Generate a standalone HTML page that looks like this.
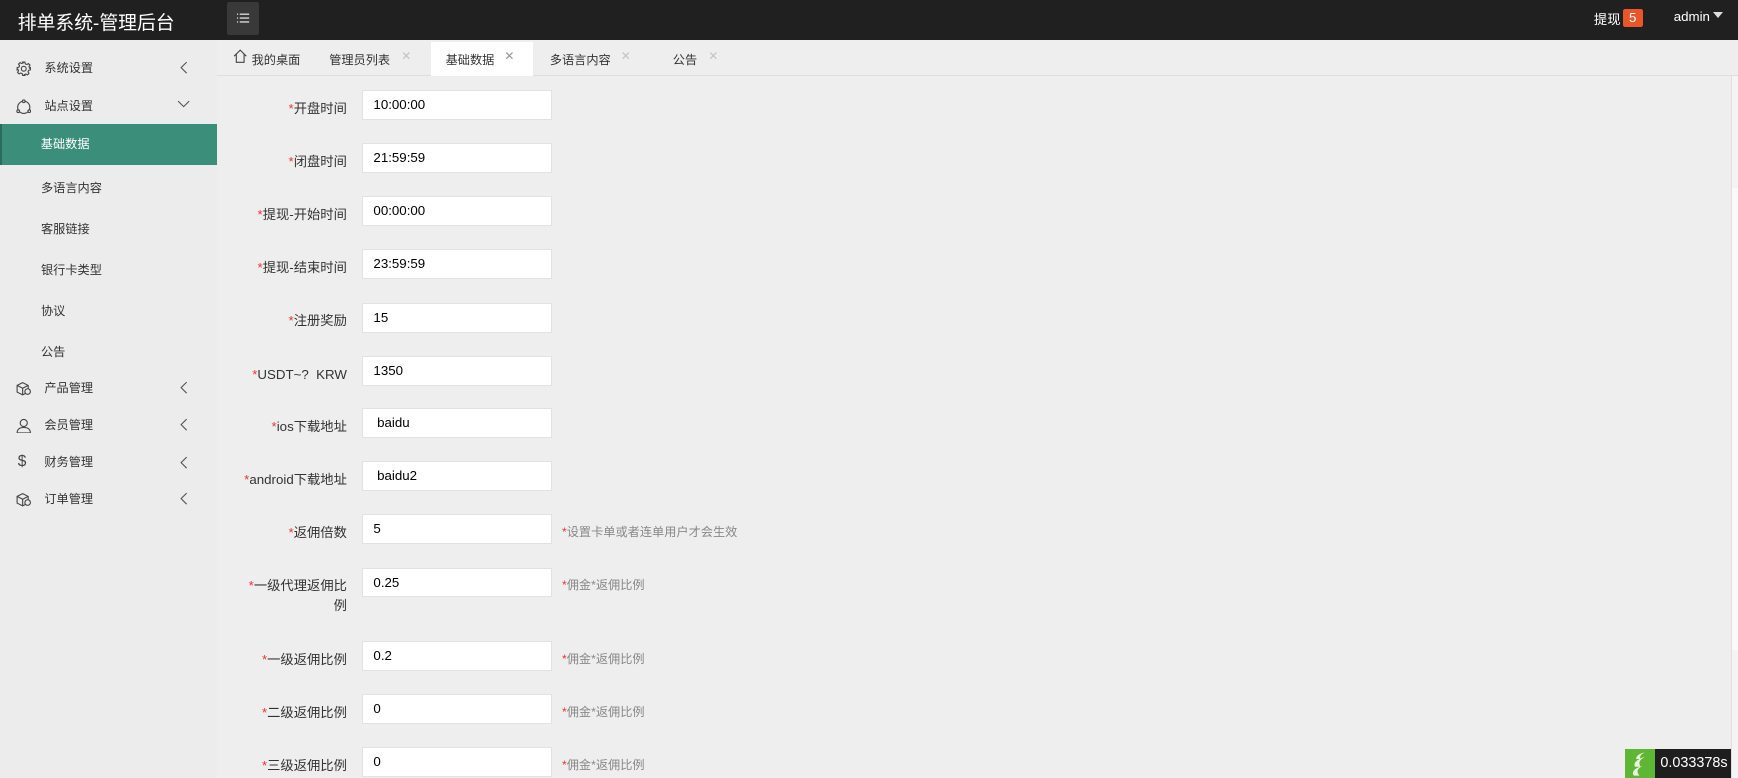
<!DOCTYPE html>
<html><head><meta charset="utf-8"><style>
*{margin:0;padding:0;box-sizing:border-box}
html,body{width:1738px;height:778px;overflow:hidden;background:#eeeeee}
#w{zoom:1.10842;width:1568px;height:702px;position:relative;font-family:"Liberation Sans","Noto Sans CJK SC",sans-serif;font-size:12px;color:#333;background:#eeeeee}
.hd{position:absolute;left:0;top:0;width:1568px;height:36px;background:#202020;color:#fff}
.title{position:absolute;left:16px;top:7px;font-size:17px}
.mb{position:absolute;left:205px;top:2px;width:29px;height:30px;background:#393939;border-radius:2px}
.sb{position:absolute;left:0;top:36px;width:196px;height:666px;background:#ececec}
.it{position:absolute;left:0;width:196px;height:34px;line-height:34px;font-size:11px;color:#333}
.it .t{position:absolute;left:40px;top:1px}
.it svg.i{position:absolute;left:14px;top:11px}
.it .ar{position:absolute;left:162px;top:11px}
.sub{position:absolute;left:37px;font-size:11px;color:#333}
.act{position:absolute;left:0;top:112px;width:196px;height:37px;background:#3a8e7a;color:#fff;line-height:37px;padding-left:35px;border-left:2px solid #2a6b5a;font-size:11px}
.tabs{position:absolute;left:196px;top:36px;width:1372px;height:33px;border-bottom:1px solid #dedede;background:#eeeeee}
.tab{position:absolute;top:9px;font-size:11px;color:#333}
.x{position:absolute;top:8px;color:#c4c4c4;font-size:11px}
.atab{position:absolute;left:193px;top:2px;width:92px;height:31px;background:#fff}
.row{position:absolute;left:0;width:1000px}
.lb{position:absolute;left:213px;width:100px;text-align:right;font-size:12px;line-height:18px;top:8px;color:#333}
.lb.w{left:223px;width:90px}
.lb b{color:#e33;font-weight:normal}
.in{position:absolute;left:327px;top:0;width:171px;height:27px;background:#fff;border:1px solid #e2e2e2;padding-left:9px;line-height:25px;font-size:12px;color:#000}
.hint{position:absolute;left:507px;top:8px;color:#888;font-size:11px;line-height:18px}
.hint b{color:#e33;font-weight:normal}
</style></head><body><div id="w">
<div class="hd">
<div class="title">排单系统-管理后台</div>
<div class="mb"><svg width="29" height="30" viewBox="0 0 29 30"><g stroke="#ddd" stroke-width="1.2"><line x1="9" y1="11" x2="10" y2="11"/><line x1="11.5" y1="11" x2="20" y2="11"/><line x1="9" y1="14.5" x2="10" y2="14.5"/><line x1="11.5" y1="14.5" x2="20" y2="14.5"/><line x1="9" y1="18" x2="10" y2="18"/><line x1="11.5" y1="18" x2="20" y2="18"/></g></svg></div>
<div style="position:absolute;left:1438px;top:8px;font-size:12px">提现</div>
<div style="position:absolute;left:1464px;top:8px;width:18px;height:16px;background:#e8562a;border-radius:2px;text-align:center;line-height:16px;font-size:12px">5</div>
<div style="position:absolute;left:1510px;top:8px;font-size:12px">admin</div>
<div style="position:absolute;left:1545px;top:11px;width:0;height:0;border-left:5px solid transparent;border-right:5px solid transparent;border-top:6px solid #ddd"></div>
</div>
<div class="sb">
<div class="it" style="top:8px"><svg class="i" width="14" height="14" viewBox="0 0 14 14" fill="none" stroke="#444" stroke-width="1"><circle cx="7" cy="7" r="2.2"/><path d="M6 1h2l.4 1.6 1.4.6 1.4-.9 1.4 1.4-.9 1.4.6 1.4L13 6v2l-1.6.4-.6 1.4.9 1.4-1.4 1.4-1.4-.9-1.4.6L8 13H6l-.4-1.6-1.4-.6-1.4.9-1.4-1.4.9-1.4-.6-1.4L1 8V6l1.6-.4.6-1.4-.9-1.4 1.4-1.4 1.4.9 1.4-.6z"/></svg><span class="t">系统设置</span><svg class="ar" width="8" height="12" viewBox="0 0 8 12"><path d="M6 1L1 6l5 5" fill="none" stroke="#555"/></svg></div>
<div class="it" style="top:42px"><svg class="i" width="14" height="14" viewBox="0 0 14 14" fill="none" stroke="#444" stroke-width="1"><circle cx="7" cy="7.5" r="5.5"/><circle cx="7" cy="2" r="1.2" fill="#ececec"/><circle cx="2" cy="11" r="1.2" fill="#ececec"/><circle cx="12" cy="11" r="1.2" fill="#ececec"/></svg><span class="t">站点设置</span><svg class="ar" width="12" height="8" viewBox="0 0 12 8" style="left:160px;top:12px"><path d="M1 1l5 5 5-5" fill="none" stroke="#555"/></svg></div>
<div class="act" style="top:76px">基础数据</div>
<div class="sub" style="top:125px">多语言内容</div>
<div class="sub" style="top:162px">客服链接</div>
<div class="sub" style="top:199px">银行卡类型</div>
<div class="sub" style="top:236px">协议</div>
<div class="sub" style="top:273px">公告</div>
<div class="it" style="top:297px"><svg class="i" width="14" height="14" viewBox="0 0 14 14" fill="none" stroke="#444" stroke-width="1"><path d="M1 4l5-2.5 5 2.5v6l-5 2.5-5-2.5zM1 4l5 2.5 5-2.5M6 6.5v6"/><circle cx="10.5" cy="9.5" r="2.5" fill="#ececec"/></svg><span class="t">产品管理</span><svg class="ar" width="8" height="12" viewBox="0 0 8 12"><path d="M6 1L1 6l5 5" fill="none" stroke="#555"/></svg></div>
<div class="it" style="top:330px"><svg class="i" width="14" height="14" viewBox="0 0 14 14" fill="none" stroke="#444" stroke-width="1"><circle cx="7" cy="4.5" r="3.2"/><path d="M1 13.5c0-3.5 2.7-5 6-5s6 1.5 6 5z"/></svg><span class="t">会员管理</span><svg class="ar" width="8" height="12" viewBox="0 0 8 12"><path d="M6 1L1 6l5 5" fill="none" stroke="#555"/></svg></div>
<div class="it" style="top:364px"><span style="position:absolute;left:16px;font-size:14px;color:#444">$</span><span class="t">财务管理</span><svg class="ar" width="8" height="12" viewBox="0 0 8 12"><path d="M6 1L1 6l5 5" fill="none" stroke="#555"/></svg></div>
<div class="it" style="top:397px"><svg class="i" width="14" height="14" viewBox="0 0 14 14" fill="none" stroke="#444" stroke-width="1"><path d="M1 4l5-2.5 5 2.5v6l-5 2.5-5-2.5zM1 4l5 2.5 5-2.5M6 6.5v6"/><circle cx="10.5" cy="9.5" r="2.5" fill="#ececec"/></svg><span class="t">订单管理</span><svg class="ar" width="8" height="12" viewBox="0 0 8 12"><path d="M6 1L1 6l5 5" fill="none" stroke="#555"/></svg></div>
</div>
<div class="tabs">
<div class="atab"></div>
<svg style="position:absolute;left:14px;top:8px" width="13" height="13" viewBox="0 0 13 13"><path d="M1 6.5L6.5 1 12 6.5M3 5v7h7V5" fill="none" stroke="#444"/></svg>
<div class="tab" style="left:31px">我的桌面</div>
<div class="tab" style="left:101px">管理员列表</div><div class="x" style="left:166px">✕</div>
<div class="tab" style="left:206px">基础数据</div><div class="x" style="left:259px;color:#999">✕</div>
<div class="tab" style="left:300px">多语言内容</div><div class="x" style="left:364px">✕</div>
<div class="tab" style="left:411px">公告</div><div class="x" style="left:443px">✕</div>
</div>
<div style="position:absolute;left:1562px;top:69px;width:6px;height:633px;background:#f4f4f4;border-left:1px solid #e0e0e0"></div>
<div style="position:absolute;left:1563px;top:170px;width:5px;height:416px;background:#fafafa"></div>

<div class="row" style="top:81px"><div class="lb"><b>*</b>开盘时间</div><div class="in">10:00:00</div></div>
<div class="row" style="top:129px"><div class="lb"><b>*</b>闭盘时间</div><div class="in">21:59:59</div></div>
<div class="row" style="top:177px"><div class="lb"><b>*</b>提现-开始时间</div><div class="in">00:00:00</div></div>
<div class="row" style="top:225px"><div class="lb"><b>*</b>提现-结束时间</div><div class="in">23:59:59</div></div>
<div class="row" style="top:273px"><div class="lb"><b>*</b>注册奖励</div><div class="in">15</div></div>
<div class="row" style="top:321px"><div class="lb"><b>*</b>USDT~?&nbsp; KRW</div><div class="in">1350</div></div>
<div class="row" style="top:368px"><div class="lb"><b>*</b>ios下载地址</div><div class="in">&nbsp;baidu</div></div>
<div class="row" style="top:416px"><div class="lb"><b>*</b>android下载地址</div><div class="in">&nbsp;baidu2</div></div>
<div class="row" style="top:464px"><div class="lb"><b>*</b>返佣倍数</div><div class="in">5</div><div class="hint"><b>*</b>设置卡单或者连单用户才会生效</div></div>
<div class="row" style="top:512px"><div class="lb w"><b>*</b>一级代理返佣比例</div><div class="in">0.25</div><div class="hint"><b>*</b>佣金*返佣比例</div></div>
<div class="row" style="top:578px"><div class="lb"><b>*</b>一级返佣比例</div><div class="in">0.2</div><div class="hint"><b>*</b>佣金*返佣比例</div></div>
<div class="row" style="top:626px"><div class="lb"><b>*</b>二级返佣比例</div><div class="in">0</div><div class="hint"><b>*</b>佣金*返佣比例</div></div>
<div class="row" style="top:674px"><div class="lb"><b>*</b>三级返佣比例</div><div class="in">0</div><div class="hint"><b>*</b>佣金*返佣比例</div></div>

<div style="position:absolute;left:1466px;top:676px;width:27px;height:26px;background:#5fb534"><svg width="27" height="26" viewBox="0 0 27 26"><path d="M8 24c-3-4 2-7 8-9-5 3-6 5-3 9zM9 16c-2-4 3-7 9-9-5 3-6 5-4 9zM10 9c0-3 3-5 8-6-4 2-5 4-4 6z" fill="#e8f4e0"/></svg></div>
<div style="position:absolute;left:1493px;top:676px;width:69px;height:26px;background:#1e1e1e;color:#fff;font-size:13px;line-height:26px;padding-left:5px">0.033378s</div>
</div></body></html>
